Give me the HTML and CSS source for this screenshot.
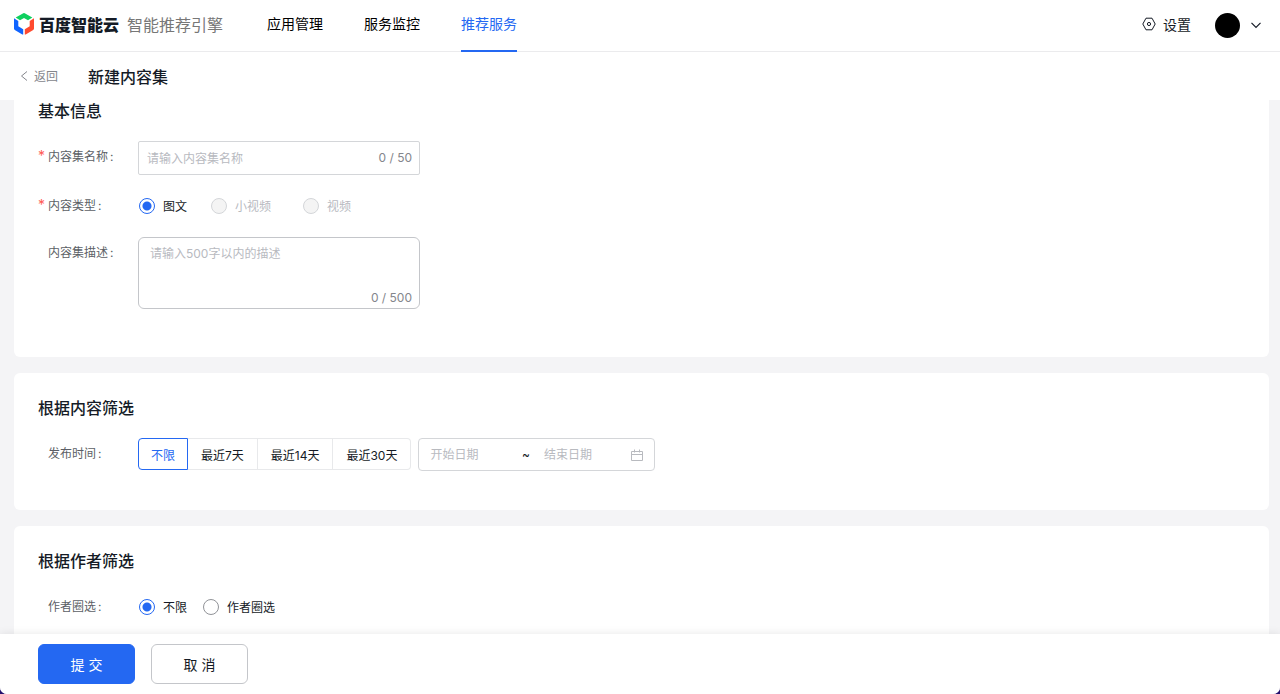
FILE: index.html
```html
<!DOCTYPE html>
<html lang="zh-CN">
<head>
<meta charset="utf-8">
<meta name="viewport" content="width=device-width, initial-scale=1">
<title>新建内容集</title>
<link rel="stylesheet" href="styles.css">
</head>
<body>
<div class="app">
  <header class="topbar">
    <a class="brand" href="#">
      <svg class="brand-mark" viewBox="0 0 20 22" aria-hidden="true">
        <path fill="#0fd05f" d="M9.300.300Q10-.1 10.700.300L18.300 4.600 14 7.200 10 5 6 7.200 1.700 4.600Z"/>
        <path fill="#1064ff" d="M0 5.300 4.300 7.900V13.300L9.200 16.200V21.400Q8.800 21.700 8.300 21.400L.8 17Q0 16.500 0 15.600Z"/>
        <path fill="#ff4a2f" d="M20 5.300V15.600Q20 16.500 19.200 17L11.700 21.400Q11.200 21.700 10.800 21.400V16.200L15.700 13.300V7.900Z"/>
      </svg>
      <span class="brand-name">百度智能云</span>
      <span class="brand-product">智能推荐引擎</span>
    </a>
    <nav class="nav">
      <a class="nav-link" href="#">应用管理</a>
      <a class="nav-link" href="#">服务监控</a>
      <a class="nav-link nav-link-active" href="#">推荐服务</a>
    </nav>
    <div class="tools">
      <a class="settings" href="#">
        <svg class="settings-icon" viewBox="0 0 14 14" aria-hidden="true">
          <path d="M4 1.200h6L13.200 7 10 12.800H4L.8 7Z"/>
          <circle cx="7" cy="7" r="1.600"/>
        </svg>
        设置
      </a>
      <button class="account" type="button" aria-label="账号">
        <span class="avatar"></span>
        <svg class="chevron" viewBox="0 0 10 8" aria-hidden="true"><path d="M.5.800 5 5.300 9.500.800"/></svg>
      </button>
    </div>
  </header>

  <div class="pagehead">
    <a class="back" href="#">
      <svg class="back-icon" viewBox="0 0 8 10" aria-hidden="true"><path d="M7 .5 1.500 5 7 9.500"/></svg>
      返回
    </a>
    <h1 class="page-title">新建内容集</h1>
  </div>

  <form class="form" id="content-form">
    <section class="card card-first">
      <h2 class="card-title">基本信息</h2>
      <div class="row">
        <label class="label required" for="name">内容集名称<span class="colon">:</span></label>
        <div class="field">
          <input class="field-input" id="name" type="text" placeholder="请输入内容集名称">
          <span class="count">0 / 50</span>
        </div>
      </div>
      <div class="row row-type">
        <span class="label required" id="type-label">内容类型<span class="colon">:</span></span>
        <div class="radios radios-wide" role="radiogroup" aria-labelledby="type-label">
          <label class="radio"><input type="radio" name="type" checked>图文</label>
          <label class="radio"><input type="radio" name="type" disabled>小视频</label>
          <label class="radio radio-last"><input type="radio" name="type" disabled>视频</label>
        </div>
      </div>
      <div class="row">
        <label class="label" for="desc">内容集描述<span class="colon">:</span></label>
        <div class="field field-area">
          <textarea class="field-text" id="desc" placeholder="请输入500字以内的描述"></textarea>
          <span class="count">0 / 500</span>
        </div>
      </div>
    </section>

    <section class="card">
      <h2 class="card-title">根据内容筛选</h2>
      <div class="row">
        <span class="label" id="time-label">发布时间<span class="colon">:</span></span>
        <div class="filters">
          <div class="segments" role="group" aria-labelledby="time-label">
            <button class="segment segment-active" type="button">不限</button>
            <button class="segment" type="button">最近7天</button>
            <button class="segment" type="button">最近14天</button>
            <button class="segment" type="button">最近30天</button>
          </div>
          <div class="range">
            <input class="range-input" type="text" placeholder="开始日期" aria-label="开始日期">
            <span class="range-sep">~</span>
            <input class="range-input" type="text" placeholder="结束日期" aria-label="结束日期">
            <svg class="calendar" viewBox="0 0 12 12" aria-hidden="true"><path d="M.5 2.500h11v9H.5ZM.5 5.500h11M3.500.5v3M8.500.5v3"/></svg>
          </div>
        </div>
      </div>
    </section>

    <section class="card">
      <h2 class="card-title">根据作者筛选</h2>
      <div class="row">
        <span class="label" id="author-label">作者圈选<span class="colon">:</span></span>
        <div class="radios" role="radiogroup" aria-labelledby="author-label">
          <label class="radio"><input type="radio" name="author" checked>不限</label>
          <label class="radio"><input type="radio" name="author">作者圈选</label>
        </div>
      </div>
    </section>
  </form>

  <footer class="actions">
    <button class="button button-primary" type="submit" form="content-form">提 交</button>
    <button class="button" type="button">取 消</button>
  </footer>
</div>
</body>
</html>
```
FILE: styles.css
```css
* { box-sizing: border-box; }

html { background: #24106e; }

body {
  margin: 0;
  font-family: Inter, "Noto Sans CJK SC", sans-serif;
  font-size: 12px;
  color: #151b26;
}

a { color: inherit; text-decoration: none; }

button, input, textarea { font: inherit; color: inherit; }

button { cursor: pointer; }

svg { fill: none; stroke: currentColor; flex: none; }

.app {
  display: flex;
  flex-direction: column;
  height: 100vh;
  overflow: hidden;
  background: #f4f4f6;
  border-radius: 0 0 7px 7px;
}

.topbar {
  display: flex;
  flex: none;
  height: 52px;
  padding: 0 19px 0 14px;
  background: #fff;
  border-bottom: 1px solid #ebebed;
}

.brand {
  display: flex;
  align-items: center;
  padding-bottom: 4px;
  font-size: 16px;
  white-space: nowrap;
}

.brand-mark { width: 20px; height: 22px; stroke: none; }

.brand-name { margin: 0 8px 0 5px; font-weight: 900; }

.brand-product { color: #777; }

.nav { display: flex; gap: 41px; margin-left: 44px; }

.nav-link {
  height: 52px;
  font-size: 14px;
  line-height: 48px;
  color: #000;
}

.nav-link-active { color: #2468f2; border-bottom: 2px solid #2468f2; }

.tools { display: flex; align-items: center; gap: 24px; margin-left: auto; }

.settings { display: flex; align-items: center; gap: 7px; padding-bottom: 4px; font-size: 14px; }

.settings-icon { width: 14px; height: 14px; }

.account {
  display: flex;
  align-items: center;
  gap: 11px;
  padding: 0;
  border: 0;
  background: none;
}

.avatar { width: 25px; height: 25px; border-radius: 50%; background: #000; }

.chevron { width: 10px; height: 8px; stroke-width: 1.200; }

.pagehead {
  display: flex;
  flex: none;
  align-items: center;
  gap: 30px;
  height: 48px;
  padding: 0 20px 1px;
  background: #fff;
}

.back { display: flex; align-items: center; gap: 6px; color: #84868c; }

.back-icon { width: 8px; height: 10px; }

.page-title { margin: 0; font-size: 16px; font-weight: 500; }

.form {
  flex: 1;
  min-height: 0;
  padding: 0 11px 0 14px;
  overflow: hidden;
}

.card {
  margin-bottom: 16px;
  padding: 24px 24px 39px;
  background: #fff;
  border-radius: 6px;
}

.card-first { padding-top: 0; padding-bottom: 48px; border-radius: 0 0 6px 6px; }

.card-title {
  margin: 0 0 19px;
  font-size: 16px;
  font-weight: 500;
  line-height: 22px;
}

.row { display: grid; grid-template-columns: 100px 1fr; }

.row-type { margin: 15px 0; }

.label { padding-left: 10px; line-height: 32px; color: #5c5f66; }

.required { padding-left: 0; }

.required::before {
  content: "*";
  display: inline-block;
  width: 10px;
  font-size: 14px;
  line-height: 16px;
  color: #ff5b55;
}

.colon { margin-left: 2px; }

.field {
  display: flex;
  align-items: center;
  width: 282px;
  height: 34px;
  padding: 0 7px 0 8px;
  border: 1px solid #d4d6d9;
  border-radius: 2px;
}

.field-input, .field-text, .range-input {
  flex: 1;
  min-width: 0;
  padding: 0;
  border: 0;
  outline: 0;
  background: none;
}

::placeholder { color: #b8babf; opacity: 1; }

.field-area {
  flex-direction: column;
  align-items: stretch;
  height: 72px;
  padding: 7px 7px 1px 11px;
  border-radius: 6px;
  border-color: #c4c6ca;
}

.field-text { line-height: 18px; resize: none; }

.count { color: #84868c; line-height: 18px; text-align: right; }

.radios {
  display: flex;
  align-items: center;
  gap: 16px;
  height: 32px;
  padding: 0 0 1px 1px;
}

.radios-wide { gap: 24px; }

.radio { display: flex; align-items: center; gap: 8px; }

.radio-last { margin-left: 8px; }

.radio input {
  appearance: none;
  width: 16px;
  height: 16px;
  margin: 0;
  border: 1px solid #919398;
  border-radius: 50%;
  background: #fff;
}

.radio input:checked {
  border-color: #2468f2;
  background: radial-gradient(circle, #2468f2 4px, #fff 5px);
}

.radio input:disabled { border-color: #d4d6d9; background: #f4f4f4; }

.radio:has(input:disabled) { color: #b8babf; }

.filters { display: flex; gap: 7px; }

.segments { display: flex; }

.segment {
  height: 32px;
  padding: 0 13px;
  border: 1px solid #e8e9eb;
  border-left-width: 0;
  background: #fff;
}

.segment:last-child { border-radius: 0 4px 4px 0; }

.segment-active {
  padding: 0 12px;
  border: 1px solid #2468f2;
  border-radius: 4px 0 0 4px;
  color: #2468f2;
}

.range {
  display: flex;
  align-items: center;
  width: 237px;
  height: 33px;
  padding: 0 11px;
  border: 1px solid #d4d6d9;
  border-radius: 4px;
}

.range-sep { margin: 0 14px 0 8px; }

.calendar { width: 12px; height: 12px; margin-left: 4px; color: #b8babf; }

.actions {
  display: flex;
  flex: none;
  align-items: center;
  gap: 16px;
  height: 60px;
  padding: 0 38px;
  background: #fff;
  box-shadow: 0 -1px 8px rgba(0, 0, 0, 0.08);
}

.button {
  width: 97px;
  height: 40px;
  padding: 0 0 1px;
  border: 1px solid #c4c6ca;
  border-radius: 6px;
  background: #fff;
  font-size: 14px;
}

.button-primary { border-color: #2468f2; background: #2468f2; color: #fff; }
```
